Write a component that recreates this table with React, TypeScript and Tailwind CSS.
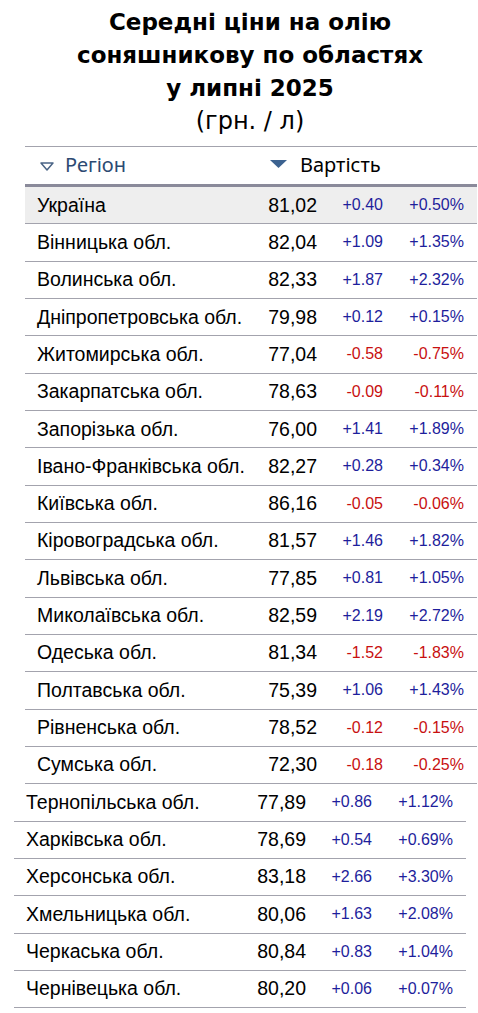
import React from "react";

type Row = [string, string, string, string];

const rows1: Row[] = [
  ["Вінницька обл.", "82,04", "+1.09", "+1.35%"],
  ["Волинська обл.", "82,33", "+1.87", "+2.32%"],
  ["Дніпропетровська обл.", "79,98", "+0.12", "+0.15%"],
  ["Житомирська обл.", "77,04", "-0.58", "-0.75%"],
  ["Закарпатська обл.", "78,63", "-0.09", "-0.11%"],
  ["Запорізька обл.", "76,00", "+1.41", "+1.89%"],
  ["Івано-Франківська обл.", "82,27", "+0.28", "+0.34%"],
  ["Київська обл.", "86,16", "-0.05", "-0.06%"],
  ["Кіровоградська обл.", "81,57", "+1.46", "+1.82%"],
  ["Львівська обл.", "77,85", "+0.81", "+1.05%"],
  ["Миколаївська обл.", "82,59", "+2.19", "+2.72%"],
  ["Одеська обл.", "81,34", "-1.52", "-1.83%"],
  ["Полтавська обл.", "75,39", "+1.06", "+1.43%"],
  ["Рівненська обл.", "78,52", "-0.12", "-0.15%"],
  ["Сумська обл.", "72,30", "-0.18", "-0.25%"],
];

const rows2: Row[] = [
  ["Тернопільська обл.", "77,89", "+0.86", "+1.12%"],
  ["Харківська обл.", "78,69", "+0.54", "+0.69%"],
  ["Херсонська обл.", "83,18", "+2.66", "+3.30%"],
  ["Хмельницька обл.", "80,06", "+1.63", "+2.08%"],
  ["Черкаська обл.", "80,84", "+0.83", "+1.04%"],
  ["Чернівецька обл.", "80,20", "+0.06", "+0.07%"],
];

function DataRow({ r, bg }: { r: Row; bg?: boolean }) {
  const neg = r[2].startsWith("-");
  const color = neg ? "text-[#c81010]" : "text-[#1e1e9c]";
  return (
    <div
      className={`flex h-[37.33px] items-center border-b border-[#a3a3ad] pl-3 pr-[13px] ${
        bg ? "bg-[#eeeeee]" : ""
      }`}
    >
      <div className="w-[220px] text-[19.5px] text-black">{r[0]}</div>
      <div className="w-[60px] text-right text-[19.5px] text-black">{r[1]}</div>
      <div className={`w-[66px] text-right text-[16px] ${color}`}>{r[2]}</div>
      <div className={`w-[81px] text-right text-[16px] ${color}`}>{r[3]}</div>
    </div>
  );
}

export default function App() {
  return (
    <div
      className="w-[478px] overflow-hidden bg-white"
      style={{ fontFamily: '"Liberation Sans", Arial, sans-serif' }}
    >
      <div
        className="pl-[22px] pt-[6px] text-center text-black"
        style={{ fontFamily: '"DejaVu Sans", Verdana, sans-serif' }}
      >
        <div className="text-[23px] font-bold leading-[33px]">
          Середні ціни на олію
          <br />
          соняшникову по областях
          <br />у липні 2025
        </div>
        <div className="text-[24px] leading-[33px]">(грн. / л)</div>
      </div>

      <div className="ml-[25px] mt-[8px] w-[452px]">
        <div
          className="flex h-[41px] items-center border-t border-b-[3px] border-t-[#a3a3ad] border-b-[#8a8a9a] pb-[2px]"
          style={{ fontFamily: '"Noto Sans", "Open Sans", sans-serif' }}
        >
          <svg width="14" height="9" viewBox="0 0 14 9" className="ml-[15px] mt-[3px]">
            <path d="M1 1 L13 1 L7 8 Z" fill="none" stroke="#4a6486" strokeWidth="1.5" strokeLinejoin="round" />
          </svg>
          <span className="ml-[11px] text-[20px] text-[#2c4a72]">Регіон</span>
          <svg width="17" height="9" viewBox="0 0 17 9" className="ml-[144px] -mt-[1px]">
            <path d="M0 0 L17 0 L8.5 8 Z" fill="#3c6290" />
          </svg>
          <span className="ml-[13px] text-[20px] text-black">Вартість</span>
        </div>
        <DataRow r={["Україна", "81,02", "+0.40", "+0.50%"]} bg />
        {rows1.map((r) => (
          <DataRow key={r[0]} r={r} />
        ))}
      </div>
      <div className="ml-[14px] w-[452px]">
        {rows2.map((r) => (
          <DataRow key={r[0]} r={r} />
        ))}
      </div>
    </div>
  );
}
